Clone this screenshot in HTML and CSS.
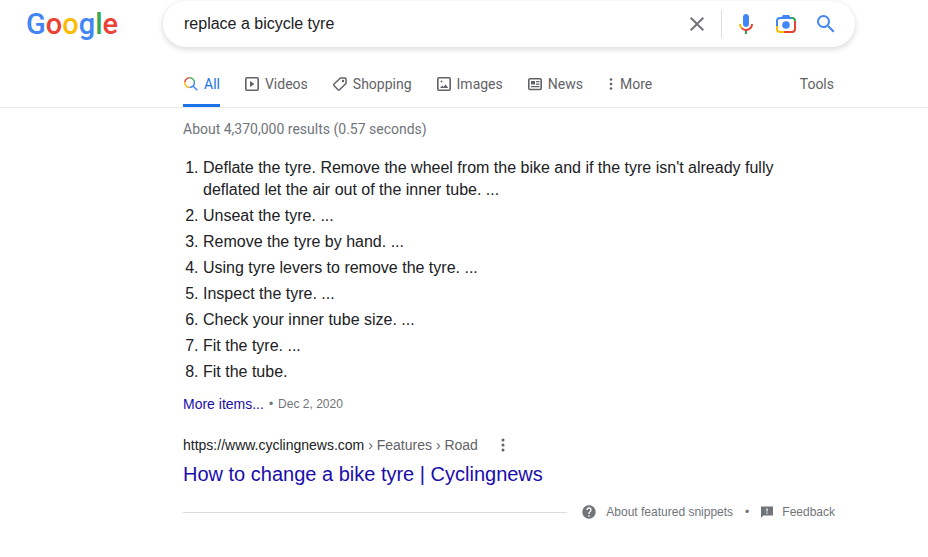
FILE: index.html
```html
<!DOCTYPE html>
<html lang="en">
<head>
<meta charset="utf-8">
<meta name="viewport" content="width=device-width, initial-scale=1">
<title>replace a bicycle tyre - Google Search</title>
<link rel="stylesheet" href="styles.css">
</head>
<body>
<header class="header">
  <a class="logo" href="#" aria-label="Google"><span class="blue">G</span><span class="red">o</span><span class="yellow">o</span><span class="blue">g</span><span class="green">l</span><span class="red">e</span></a>
  <form class="search" role="search">
    <input class="search-input" type="text" aria-label="Search" value="replace a bicycle tyre">
    <button class="icon-button clear" type="button" aria-label="Clear">
      <svg width="24" height="24" viewBox="0 0 24 24"><path fill="#70757a" d="M19 6.41L17.59 5 12 10.59 6.41 5 5 6.41 10.59 12 5 17.59 6.41 19 12 13.41 17.59 19 19 17.59 13.41 12z"/></svg>
    </button>
    <button class="icon-button" type="button" aria-label="Search by voice">
      <svg width="24" height="24" viewBox="0 0 24 24"><path fill="#4285f4" d="M12 15c1.66 0 3-1.31 3-2.97v-7.02C15 3.34 13.66 2 12 2S9 3.34 9 5.01v7.02C9 13.69 10.34 15 12 15z"/><path fill="#34a853" d="M11 18.08h2V22h-2z"/><path fill="#fbbc04" d="M7.05 16.87C5.78 15.59 5 13.96 5 12h2c0 1.45.56 2.42 1.47 3.38v.32l-1.15 1.18z"/><path fill="#ea4335" d="M12 16.93c-1.38 0-2.63-.57-3.53-1.5l-1.42 1.44C8.32 18.14 10.06 19 11.99 19c3.87 0 7.01-2.92 7.01-7h-2c0 2.92-2.24 4.93-5 4.93z"/></svg>
    </button>
    <button class="icon-button" type="button" aria-label="Search by image">
      <svg width="24" height="24" viewBox="0 0 24 24" fill="none" stroke-width="2"><path stroke="#fbbc04" d="M3 14v3a3 3 0 0 0 3 3h4"/><path stroke="#ea4335" d="M10 20h8a3 3 0 0 0 3-3V9"/><path stroke="#34a853" d="M17 6h1a3 3 0 0 1 3 3"/><path stroke="#4285f4" d="M3 14V9a3 3 0 0 1 3-3h11"/><path fill="#4285f4" d="M7 6l2-3h6l2 3z"/><circle cx="12" cy="13" r="3.800" fill="#4285f4"/></svg>
    </button>
    <button class="icon-button" type="submit" aria-label="Submit search">
      <svg width="24" height="24" viewBox="0 0 24 24"><path fill="#4285f4" d="M15.5 14h-.79l-.28-.27A6.47 6.47 0 0 0 16 9.5 6.5 6.5 0 1 0 9.5 16c1.61 0 3.09-.59 4.23-1.57l.27.28v.79l5 4.99L20.49 19zm-6 0a4.5 4.5 0 1 1 0-9 4.5 4.5 0 0 1 0 9z"/></svg>
    </button>
  </form>
</header>
<nav class="tabs" aria-label="Search modes">
  <a class="tab active" href="#" aria-current="page"><svg width="16" height="16" viewBox="0 0 16 16" fill="none" stroke-width="1.500"><path stroke="#ea4335" d="M1.800 6.600A4.800 4.800 0 0 1 6.600 1.800"/><path stroke="#34a853" d="M6.600 1.800A4.800 4.800 0 0 1 11.400 6.600"/><path stroke="#fbbc04" d="M1.800 6.600A4.800 4.800 0 0 0 6.600 11.400"/><path stroke="#4285f4" d="M6.600 11.400A4.800 4.800 0 0 0 11.400 6.600M10 10l4.300 4.300"/></svg>All</a>
  <a class="tab" href="#"><svg width="16" height="16" viewBox="0 0 16 16"><rect x="1.800" y="1.800" width="12.400" height="12.400" rx="1.200" fill="none" stroke="currentColor" stroke-width="1.600"/><path fill="currentColor" d="M6 5v6l4.500-3z"/></svg>Videos</a>
  <a class="tab" href="#"><svg width="16" height="16" viewBox="0 0 16 16"><path fill="none" stroke="currentColor" stroke-width="1.500" stroke-linejoin="round" d="M8.500 2H13a1 1 0 0 1 1 1v4.500L7.500 13.700q-.8.700-1.500 0L2 9.500q-.7-.8 0-1.500z"/><circle cx="11" cy="5" r="1.200" fill="currentColor"/></svg>Shopping</a>
  <a class="tab" href="#"><svg width="16" height="16" viewBox="0 0 16 16"><rect x="1.800" y="1.800" width="12.400" height="12.400" rx="1.200" fill="none" stroke="currentColor" stroke-width="1.600"/><path fill="currentColor" d="M4 12l2.200-2.600L7.500 11l2-2.500L12.300 12z"/><circle cx="5.500" cy="5.500" r="1" fill="currentColor"/></svg>Images</a>
  <a class="tab" href="#"><svg width="16" height="16" viewBox="0 0 16 16"><rect x="1.800" y="2.800" width="12.400" height="10.700" rx="1.200" fill="none" stroke="currentColor" stroke-width="1.600"/><path fill="currentColor" d="M4 5h4v3.500H4zM9 5h3.500v1.300H9zM9 7.500h3.500v1.300H9zM4 10h8.500v1.300H4z"/></svg>News</a>
  <button class="tab more" type="button"><svg width="8" height="16" viewBox="0 0 8 16" fill="currentColor"><circle cx="4" cy="3.500" r="1.300"/><circle cx="4" cy="8" r="1.300"/><circle cx="4" cy="12.500" r="1.300"/></svg>More</button>
  <button class="tab tools" type="button">Tools</button>
</nav>
<main class="results">
  <p class="stats">About 4,370,000 results (0.57 seconds)</p>
  <ol class="steps">
    <li>Deflate the tyre. Remove the wheel from the bike and if the tyre isn't already fully deflated let the air out of the inner tube. ...</li>
    <li>Unseat the tyre. ...</li>
    <li>Remove the tyre by hand. ...</li>
    <li>Using tyre levers to remove the tyre. ...</li>
    <li>Inspect the tyre. ...</li>
    <li>Check your inner tube size. ...</li>
    <li>Fit the tyre. ...</li>
    <li>Fit the tube.</li>
  </ol>
  <p class="more-items"><a href="#">More items...</a><span class="meta">•</span><span class="meta">Dec 2, 2020</span></p>
  <div class="source">
    <cite class="cite">https://www.cyclingnews.com<span class="path"> › Features › Road</span></cite>
    <button class="menu" type="button" aria-label="About this result"><svg width="4" height="16" viewBox="0 0 4 16" fill="currentColor"><circle cx="2" cy="3" r="1.500"/><circle cx="2" cy="8" r="1.500"/><circle cx="2" cy="13" r="1.500"/></svg></button>
  </div>
  <h3 class="title"><a href="#">How to change a bike tyre | Cyclingnews</a></h3>
  <footer class="snippet-footer">
    <span class="rule"></span>
    <a class="foot-link" href="#"><svg width="16" height="16" viewBox="0 0 24 24"><path fill="currentColor" d="M12 2C6.480 2 2 6.480 2 12s4.480 10 10 10 10-4.480 10-10S17.520 2 12 2zm1 17h-2v-2h2zm2.070-7.750l-.9.920C13.450 12.900 13 13.500 13 15h-2v-.5c0-1.100.45-2.100 1.170-2.830l1.240-1.260c.37-.36.59-.86.590-1.410 0-1.100-.9-2-2-2s-2 .9-2 2H8c0-2.210 1.790-4 4-4s4 1.790 4 4c0 .88-.36 1.680-.93 2.250z"/></svg>About featured snippets</a>
    <span class="dot">•</span>
    <a class="foot-link" href="#"><svg width="12" height="12" viewBox="2 2 20 20"><path fill="currentColor" d="M22 3H2v19l4-4h16zM13 15h-2v-2h2zm0-4h-2V6h2z"/></svg>Feedback</a>
  </footer>
</main>
</body>
</html>
```
FILE: styles.css
```css
* {
  box-sizing: border-box;
}

body {
  margin: 0;
  background: #fff;
  color: #202124;
  font-family: Arial, "Liberation Sans", sans-serif;
  font-size: 14px;
}

a {
  color: inherit;
  text-decoration: none;
}

button {
  padding: 0;
  border: 0;
  background: none;
  font: inherit;
  color: inherit;
}

svg {
  display: block;
  flex: none;
}

.header {
  display: flex;
  align-items: flex-start;
  padding: 1px 73px 0 26px;
}

.logo {
  width: 137px;
  flex: none;
  font: 500 29px/46px Roboto, sans-serif;
}

.blue { color: #4285f4; }
.red { color: #ea4335; }
.yellow { color: #fbbc05; }
.green { color: #34a853; }

.search {
  display: flex;
  flex: 1;
  align-items: center;
  max-width: 692px;
  height: 46px;
  padding: 0 9px 0 21px;
  border-radius: 24px;
  background: #fff;
  box-shadow: 0 2px 5px 1px rgba(64, 60, 67, 0.16);
}

.search-input {
  flex: 1;
  min-width: 0;
  padding: 0;
  border: 0;
  outline: 0;
  background: none;
  color: #202124;
  font: 16px/22px Arial, "Liberation Sans", sans-serif;
}

.icon-button {
  display: flex;
  align-items: center;
  justify-content: center;
  width: 40px;
}

.clear {
  width: 37px;
  height: 28px;
  padding-right: 12px;
  margin-right: 4px;
  border-right: 1px solid #dadce0;
}

.tabs {
  display: flex;
  gap: 24px;
  height: 61px;
  padding: 14px 94px 0 183px;
  border-bottom: 1px solid #ebebeb;
  color: #5f6368;
  font-family: Roboto, Arial, sans-serif;
}

.tab {
  display: flex;
  align-items: center;
  gap: 5px;
  height: 46px;
  white-space: nowrap;
}

.active {
  border-bottom: 3px solid #1a73e8;
  border-top: 3px solid transparent;
  color: #1a73e8;
}

.tools {
  margin-left: auto;
}

.results {
  max-width: 835px;
  padding-left: 183px;
}

.stats {
  margin: 0;
  padding-top: 10px;
  color: #70757a;
  font: 14px/22px Roboto, Arial, sans-serif;
}

.steps {
  margin: 17px 0 0;
  padding-left: 20px;
  font-size: 16px;
  line-height: 22px;
}

.steps li {
  margin-bottom: 4px;
  max-width: 600px;
}

.more-items {
  display: flex;
  align-items: center;
  gap: 5px;
  margin: 10px 0 0;
  color: #1a0dab;
  line-height: 22px;
}

.meta {
  color: #70757a;
  font-size: 12px;
}

.source {
  display: flex;
  align-items: center;
  gap: 23px;
  margin-top: 19px;
  line-height: 22px;
}

.cite {
  font-style: normal;
}

.path,
.menu {
  color: #5f6368;
}

.title {
  margin: 5px 0 0;
  color: #1a0dab;
  font-size: 20px;
  font-weight: 400;
  line-height: 26px;
}

.snippet-footer {
  display: flex;
  align-items: center;
  margin-top: 17px;
  color: #70757a;
  font-size: 12px;
  line-height: 16px;
}

.rule {
  flex: 1;
  height: 1px;
  margin-right: 14px;
  background: #dadce0;
}

.foot-link {
  display: flex;
  align-items: center;
  gap: 9px;
}

.dot {
  margin: 0 12px;
}
```
